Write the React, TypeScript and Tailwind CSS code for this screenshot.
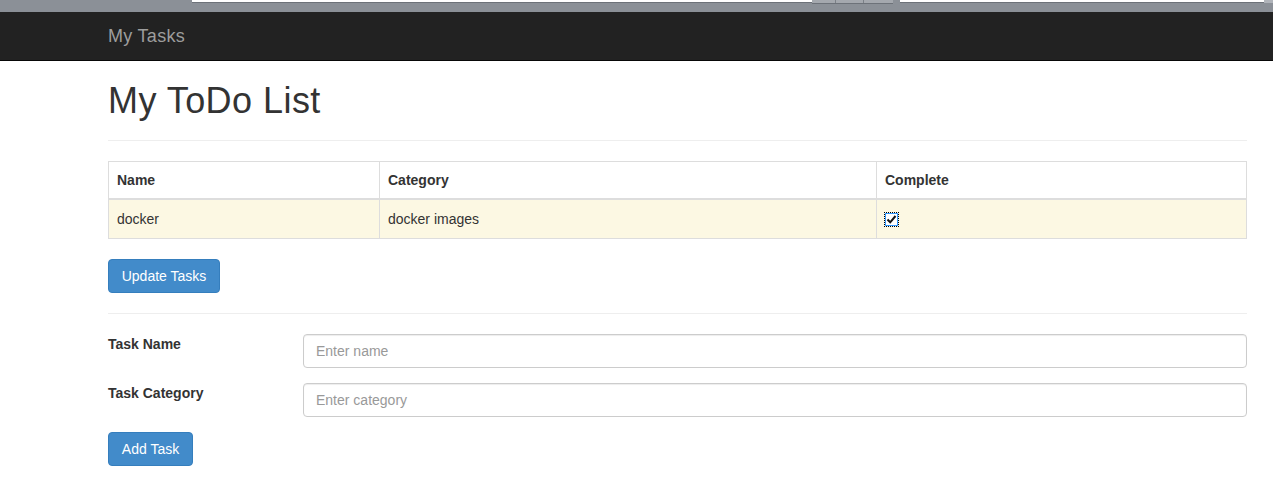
import React from "react";

function Checkbox() {
  return (
    <span className="inline-flex items-center justify-center w-[15px] h-[15px] outline-1 outline-dotted outline-black -outline-offset-1">
      <span className="flex items-center justify-center w-[13px] h-[13px] bg-white border border-[#3399ff]">
        <svg width="11" height="11" viewBox="0 0 11 11">
          <path d="M1.5 5.5 L4.2 8.3 L9.5 2" fill="none" stroke="#111" strokeWidth="2" />
        </svg>
      </span>
    </span>
  );
}

export default function App() {
  const font = { fontFamily: '"Liberation Sans", Arial, Helvetica, sans-serif' };
  return (
    <div style={font} className="w-[1273px] min-h-[489px] bg-white text-[14px] leading-[20px] text-[#333]">
      {/* browser chrome strip */}
      <div className="h-[12px] bg-[#8b9097] flex items-start">
        <div className="ml-[192px] w-[620px] h-[3px] bg-white border-b border-[#6d7279]" />
        <div className="w-[81px] h-[4px] flex bg-[#a4a8ae] border-b border-[#6d7279]">
          <div className="w-[24px] border-r border-[#7b8087]" />
          <div className="w-[28px] border-r border-[#7b8087]" />
          <div className="flex-1" />
        </div>
        <div className="w-[7px]" />
        <div className="w-[364px] h-[3px] bg-white border-b border-[#6d7279]" />
        <div className="w-[9px] h-[3px] bg-[#b0b4ba]" />
      </div>

      {/* navbar */}
      <div className="h-[49px] bg-[#222222] border-b border-[#080808] flex items-center">
        <span className="ml-[108px] text-[18px] leading-[20px] tracking-[0.3px] text-[#9d9d9d]">My Tasks</span>
      </div>

      <div className="ml-[108px] w-[1139px]">
        <h1 className="mt-[20px] text-[36px] leading-[39.6px] font-normal tracking-[0.45px] text-[#333]">My ToDo List</h1>
        <div className="mt-[19px] h-px bg-[#eeeeee]" />

        {/* table */}
        <div className="mt-[20px] border border-[#dddddd]">
          <div className="flex h-[36px] font-bold border-b-2 border-[#dddddd] box-content">
            <div className="w-[271px] px-[8px] flex items-center border-r border-[#dddddd]">Name</div>
            <div className="w-[497px] px-[8px] flex items-center border-r border-[#dddddd]">Category</div>
            <div className="flex-1 px-[8px] flex items-center">Complete</div>
          </div>
          <div className="flex h-[38px] bg-[#fcf8e3]">
            <div className="w-[271px] px-[8px] flex items-center border-r border-[#dddddd]">docker</div>
            <div className="w-[497px] px-[8px] flex items-center border-r border-[#dddddd]">docker images</div>
            <div className="flex-1 px-[7px] pt-[10px]">
              <Checkbox />
            </div>
          </div>
        </div>

        <button className="mt-[20px] h-[34px] w-[112px] rounded-[4px] bg-[#428bca] border border-[#357ebd] text-white text-[14px] leading-[20px]">
          Update Tasks
        </button>

        <div className="mt-[20px] h-px bg-[#eeeeee]" />

        {/* form */}
        <div className="mt-[20px] flex items-start">
          <label className="w-[195px] font-bold">Task Name</label>
          <input
            placeholder="Enter name"
            className="flex-1 h-[34px] px-[12px] border border-[#cccccc] rounded-[4px] shadow-[inset_0_1px_1px_rgba(0,0,0,0.075)] text-[14px] placeholder:text-[#999] outline-none"
            style={font}
          />
        </div>
        <div className="mt-[15px] flex items-start">
          <label className="w-[195px] font-bold">Task Category</label>
          <input
            placeholder="Enter category"
            className="flex-1 h-[34px] px-[12px] border border-[#cccccc] rounded-[4px] shadow-[inset_0_1px_1px_rgba(0,0,0,0.075)] text-[14px] placeholder:text-[#999] outline-none"
            style={font}
          />
        </div>
        <button className="mt-[15px] h-[34px] w-[85px] rounded-[4px] bg-[#428bca] border border-[#357ebd] text-white text-[14px] leading-[20px]">
          Add Task
        </button>
      </div>
    </div>
  );
}
